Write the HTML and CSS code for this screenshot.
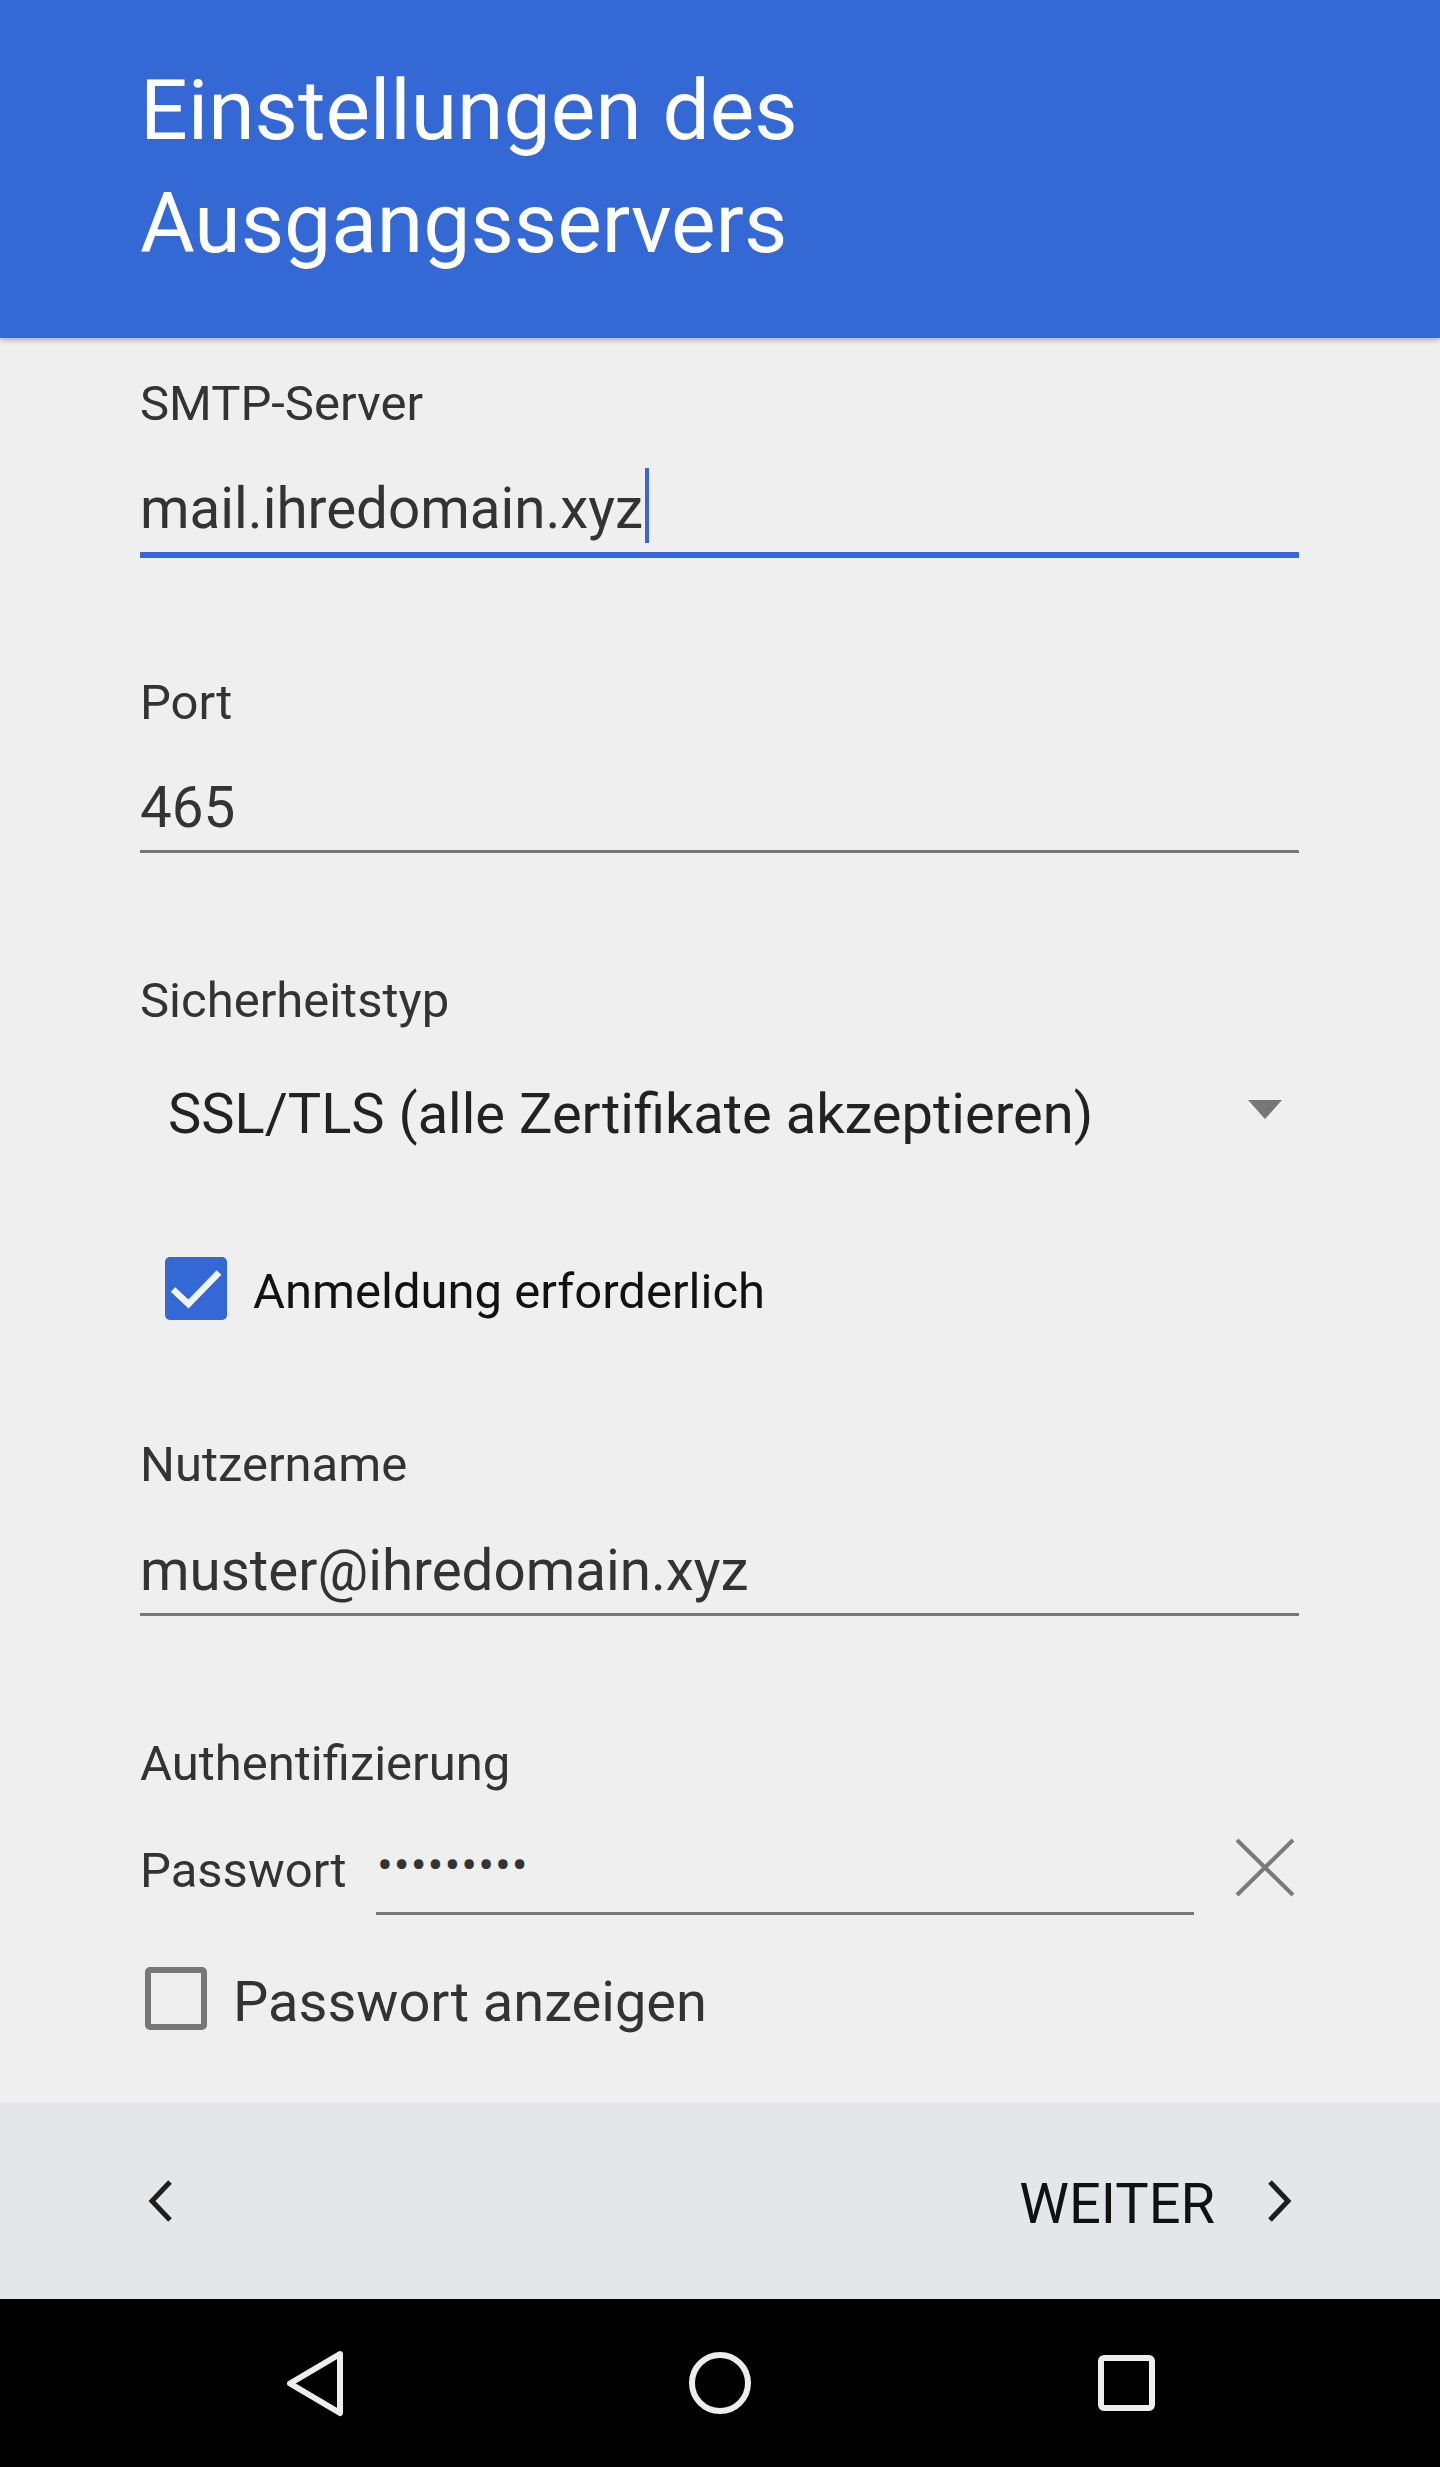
FILE: index.html
```html
<!DOCTYPE html>
<html lang="de">
<head>
<meta charset="utf-8">
<title>Einstellungen des Ausgangsservers</title>
<link rel="stylesheet" href="styles.css">
</head>
<body>
<div class="screen">
  <header class="appbar">
    <h1 class="title">Einstellungen des<br>Ausgangsservers</h1>
  </header>

  <main class="form">
    <div class="field field-smtp">
      <div class="label">SMTP-Server</div>
      <div class="value value-focused">mail.ihredomain.xyz<span class="cursor"></span></div>
    </div>

    <div class="field field-port">
      <div class="label">Port</div>
      <div class="value">465</div>
    </div>

    <div class="field field-security">
      <div class="label">Sicherheitstyp</div>
      <div class="select">
        <span class="select-text">SSL/TLS (alle Zertifikate akzeptieren)</span>
        <span class="select-arrow"></span>
      </div>
    </div>

    <div class="check check-login">
      <span class="box box-checked">
        <svg class="tick" viewBox="0 0 62 63" width="62" height="63"><path d="M8 32.5 L23.5 47 L54 15.5" fill="none" stroke="#f4f4f4" stroke-width="6.5"/></svg>
      </span>
      <span class="check-text check-text-login">Anmeldung erforderlich</span>
    </div>

    <div class="field field-user">
      <div class="label">Nutzername</div>
      <div class="value value-user">muster@ihredomain.xyz</div>
    </div>

    <div class="field field-auth">
      <div class="label">Authentifizierung</div>
      <div class="pw-row">
        <span class="pw-label">Passwort</span>
        <span class="pw-input"><span class="pw-dots">•••••••••</span></span>
        <svg class="pw-clear" viewBox="0 0 60 59" width="60" height="59"><path d="M2 2 L58 57 M58 2 L2 57" stroke="#7a7a7a" stroke-width="4" fill="none"/></svg>
      </div>
    </div>

    <div class="check check-show">
      <span class="box box-empty"></span>
      <span class="check-text check-text-show">Passwort anzeigen</span>
    </div>
  </main>

  <footer class="wizard-bar">
    <svg class="chev chev-left" viewBox="0 0 26 42" width="26" height="42"><path d="M23 2 L5 21 L23 40" fill="none" stroke="#1e1e1e" stroke-width="5"/></svg>
    <div class="wizard-next">
      <span class="next-text">WEITER</span>
      <svg class="chev chev-right" viewBox="0 0 26 42" width="26" height="42"><path d="M3 2 L21 21 L3 40" fill="none" stroke="#1e1e1e" stroke-width="5"/></svg>
    </div>
  </footer>

  <nav class="sysnav">
    <svg class="nav-icon" viewBox="0 0 100 100" width="100" height="100"><path d="M76 21 L26 50.5 L76 80 Z" fill="none" stroke="#ededed" stroke-width="6" stroke-linejoin="round"/></svg>
    <svg class="nav-icon" viewBox="0 0 100 100" width="100" height="100"><circle cx="50" cy="50" r="28" fill="none" stroke="#ededed" stroke-width="6"/></svg>
    <svg class="nav-icon" viewBox="0 0 100 100" width="100" height="100"><rect x="25" y="25" width="51" height="50" rx="3" fill="none" stroke="#ededed" stroke-width="6"/></svg>
  </nav>
</div>
</body>
</html>
```

FILE: styles.css
```css
* {
  box-sizing: border-box;
}

html, body {
  margin: 0;
  padding: 0;
  background: #efefef;
}

.screen {
  width: 1440px;
  height: 2467px;
  display: flex;
  flex-direction: column;
  background: #efefef;
  font-family: Roboto, "Noto Sans", "Liberation Sans", sans-serif;
}

/* ---------- App bar ---------- */
.appbar {
  height: 338px;
  flex: none;
  background: #3468d5;
  padding: 54px 0 0 140px;
  position: relative;
  z-index: 1;
  box-shadow: 0 2px 5px rgba(0, 0, 0, 0.28);
}

.title {
  margin: 0;
  font-weight: 400;
  font-size: 84px;
  line-height: 113px;
  color: #ffffff;
}

/* ---------- Form ---------- */
.form {
  flex: 1;
  padding: 0 141px 0 140px;
}

.label {
  font-size: 49px;
  line-height: 56px;
  color: #333333;
}

.value {
  margin-top: 44px;
  font-size: 56.5px;
  line-height: 66px;
  color: #333333;
  padding-bottom: 9px;
  border-bottom: 3px solid #777777;
}

.value-focused {
  padding-bottom: 10px;
  border-bottom: 6px solid #3468d6;
}

.value-user {
  margin-top: 45px;
}

.cursor {
  display: inline-block;
  width: 4px;
  height: 75px;
  background: #3468d6;
  vertical-align: top;
  margin: -8px 0 -9px 2px;
}

.field-smtp {
  margin-top: 38px;
}

.field-port {
  margin-top: 117px;
}

.field-security {
  margin-top: 120px;
}

.field-user {
  margin-top: 114px;
}

.field-auth {
  margin-top: 120px;
}

/* select */
.select {
  margin-top: 52px;
  display: flex;
  align-items: flex-start;
  justify-content: space-between;
  padding-left: 28px;
  padding-right: 17px;
}

.select-text {
  font-size: 56px;
  line-height: 66px;
  color: #222222;
}

.select-arrow {
  margin-top: 19px;
  width: 0;
  height: 0;
  border-left: 17px solid transparent;
  border-right: 17px solid transparent;
  border-top: 19px solid #777777;
}

/* checkboxes */
.check {
  display: flex;
  align-items: flex-start;
}

.check-login {
  margin-top: 110px;
  padding-left: 25px;
}

.check-show {
  margin-top: 52px;
  padding-left: 5px;
}

.box {
  flex: none;
  width: 62px;
  height: 63px;
  border-radius: 5px;
}

.box-checked {
  background: #3468d6;
}

.tick {
  display: block;
}

.box-empty {
  border: 6px solid #777777;
}

.check-text {
  line-height: 63px;
}

.check-text-login {
  margin: 3px 0 0 26px;
  font-size: 49px;
  color: #111111;
}

.check-text-show {
  margin: 4px 0 0 26px;
  font-size: 56px;
  color: #333333;
}

/* password row */
.pw-row {
  margin-top: 51px;
  display: flex;
  align-items: flex-start;
}

.pw-label {
  flex: none;
  width: 236px;
  font-size: 49px;
  line-height: 56px;
  color: #333333;
}

.pw-input {
  flex: none;
  width: 818px;
  height: 72px;
  border-bottom: 3px solid #777777;
  padding-left: 1px;
}

.pw-dots {
  display: block;
  font-size: 47px;
  line-height: 44px;
  letter-spacing: 1px;
  color: #333333;
}

.pw-clear {
  flex: none;
  margin: -5px 0 0 41px;
}

/* ---------- Wizard bar ---------- */
.wizard-bar {
  flex: none;
  height: 196px;
  background: #e3e7ea;
  display: flex;
  justify-content: space-between;
  align-items: flex-start;
  padding: 0 147px;
}

.chev {
  display: block;
  margin-top: 77px;
}

.wizard-next {
  display: flex;
  align-items: flex-start;
}

.next-text {
  margin-top: 68px;
  margin-right: 52px;
  font-size: 56px;
  line-height: 66px;
  color: #111111;
}

/* ---------- System navigation ---------- */
.sysnav {
  flex: none;
  height: 168px;
  background: #000000;
  display: flex;
  justify-content: center;
  align-items: center;
  gap: 306px;
}

.nav-icon {
  display: block;
}
```
